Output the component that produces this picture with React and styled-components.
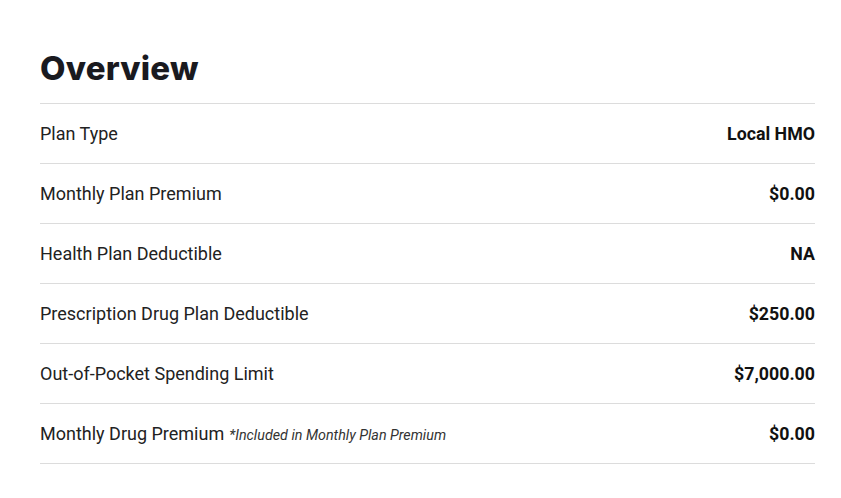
import React from 'react';
import styled, { createGlobalStyle } from 'styled-components';

const GlobalStyle = createGlobalStyle`
  body {
    margin: 0;
    background: #fff;
    font-family: Roboto, "Liberation Sans", sans-serif;
    color: #222;
  }
`;

const Page = styled.div`
  width: 775px;
  padding: 46px 0 0 40px;
`;

const Title = styled.h2`
  margin: 0;
  height: 57px;
  font-family: Inter, "Liberation Sans", sans-serif;
  font-size: 33px;
  font-weight: 800;
  letter-spacing: 0.2px;
  line-height: 44px;
  color: #1a1a1f;
`;

const Table = styled.div`
  border-top: 1px solid #dcdcdc;
`;

const Row = styled.div`
  display: flex;
  justify-content: space-between;
  align-items: center;
  height: 59px;
  border-bottom: 1px solid #dcdcdc;
  font-size: 18px;
`;

const Label = styled.span`
  color: #222;
`;

const Note = styled.em`
  font-size: 14.3px;
  color: #333;
  margin-left: 5px;
`;

const Value = styled.span`
  font-weight: 700;
  font-size: 17.8px;
  color: #111;
`;

const rows = [
  ['Plan Type', 'Local HMO'],
  ['Monthly Plan Premium', '$0.00'],
  ['Health Plan Deductible', 'NA'],
  ['Prescription Drug Plan Deductible', '$250.00'],
  ['Out-of-Pocket Spending Limit', '$7,000.00'],
  ['Monthly Drug Premium', '$0.00', '*Included in Monthly Plan Premium'],
];

export default function App() {
  return (
    <>
      <GlobalStyle />
      <Page>
        <Title>Overview</Title>
        <Table>
          {rows.map(([label, value, note]) => (
            <Row key={label}>
              <Label>
                {label}
                {note && <Note>{note}</Note>}
              </Label>
              <Value>{value}</Value>
            </Row>
          ))}
        </Table>
      </Page>
    </>
  );
}
